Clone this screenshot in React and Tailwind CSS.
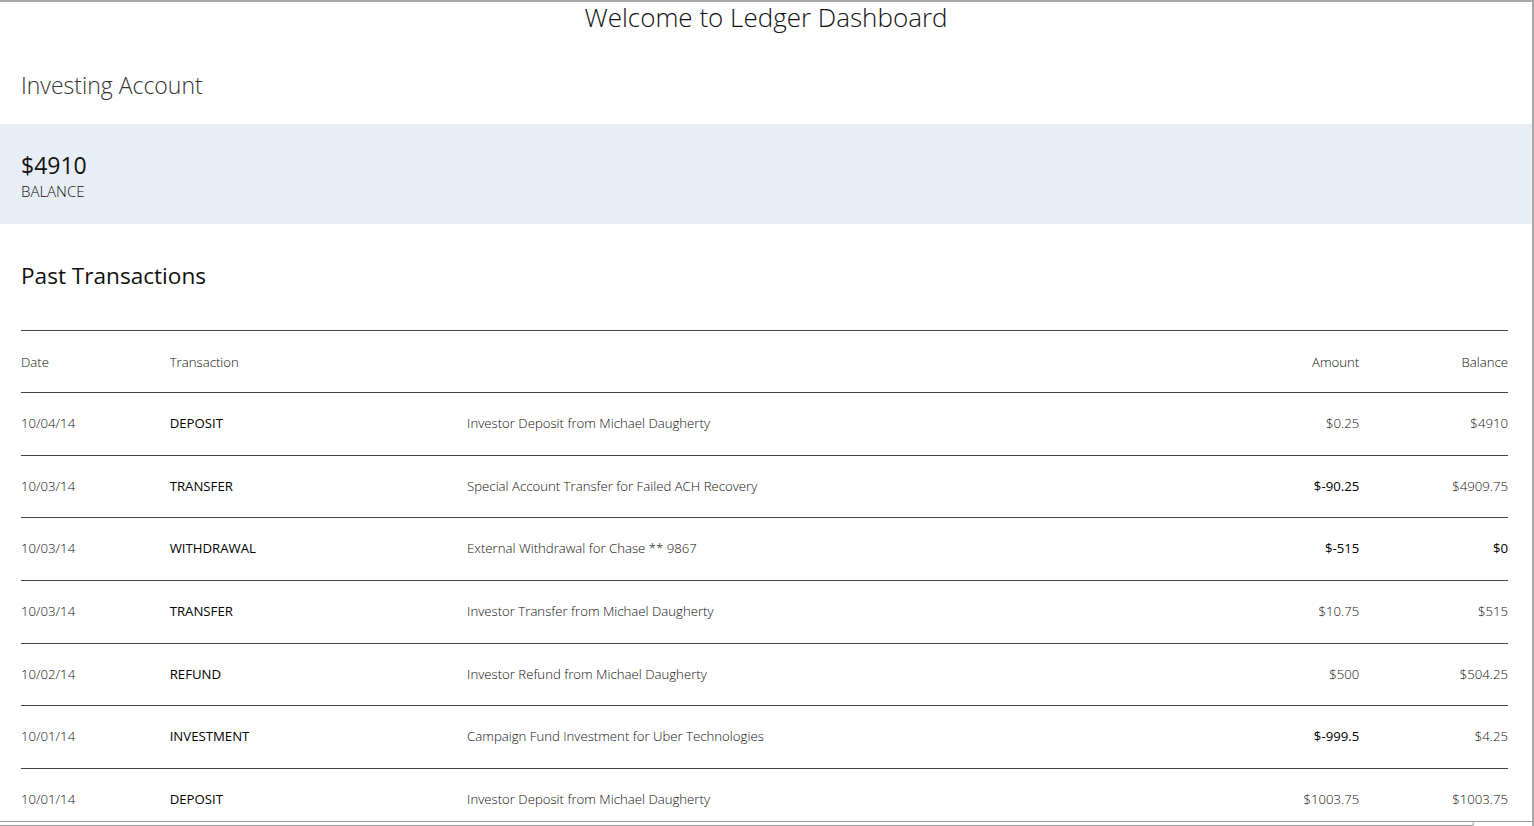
import React from "react";

const rows = [
  { date: "10/04/14", type: "DEPOSIT", desc: "Investor Deposit from Michael Daugherty", amount: "$0.25", neg: false, balance: "$4910", bb: false },
  { date: "10/03/14", type: "TRANSFER", desc: "Special Account Transfer for Failed ACH Recovery", amount: "$-90.25", neg: true, balance: "$4909.75", bb: false },
  { date: "10/03/14", type: "WITHDRAWAL", desc: "External Withdrawal for Chase ** 9867", amount: "$-515", neg: true, balance: "$0", bb: true },
  { date: "10/03/14", type: "TRANSFER", desc: "Investor Transfer from Michael Daugherty", amount: "$10.75", neg: false, balance: "$515", bb: false },
  { date: "10/02/14", type: "REFUND", desc: "Investor Refund from Michael Daugherty", amount: "$500", neg: false, balance: "$504.25", bb: false },
  { date: "10/01/14", type: "INVESTMENT", desc: "Campaign Fund Investment for Uber Technologies", amount: "$-999.5", neg: true, balance: "$4.25", bb: false },
  { date: "10/01/14", type: "DEPOSIT", desc: "Investor Deposit from Michael Daugherty", amount: "$1003.75", neg: false, balance: "$1003.75", bb: false },
];

export default function App() {
  return (
    <div
      className="relative h-[826px] w-full overflow-hidden border-t-2 border-r-2 border-[#a8a8a8] bg-white text-[#222]"
      style={{ fontFamily: '"Open Sans", "Noto Sans", sans-serif' }}
    >
      <h1 className="text-center text-[26px] font-light leading-[30px] text-[#111]">
        Welcome to Ledger Dashboard
      </h1>
      <h2 className="mt-[37px] pl-[21px] text-[23px] font-light leading-[32px] text-[#333]">
        Investing Account
      </h2>
      <div className="mt-[23px] flex h-[100px] flex-col justify-center bg-[#e7eef5] pl-[21px] pt-[3px]">
        <div className="text-[23px] leading-[28px] text-[#111]">$4910</div>
        <div className="mt-[3px] text-[15px] font-light leading-[18px] text-[#111]">BALANCE</div>
      </div>
      <div className="pl-[21px] pr-[24px]">
        <h3 className="mt-[37px] text-[22.6px] leading-[30px] text-[#111]">Past Transactions</h3>
        <table className="mt-[39px] w-full table-fixed border-collapse border-t border-[#444] text-[13.2px]">
          <colgroup>
            <col className="w-[10%]" />
            <col className="w-[20%]" />
            <col className="w-[50%]" />
            <col className="w-[10%]" />
            <col className="w-[10%]" />
          </colgroup>
          <thead>
            <tr className="h-[62px] border-b border-[#444]">
              <th className="pt-[2px] text-left font-light text-[#111]">Date</th>
              <th className="pt-[2px] text-left font-light text-[#111]">Transaction</th>
              <th></th>
              <th className="pt-[2px] text-right font-light text-[#111]">Amount</th>
              <th className="pt-[2px] text-right font-light text-[#111]">Balance</th>
            </tr>
          </thead>
          <tbody>
            {rows.map((r, i) => (
              <tr key={i} className="h-[62.7px] border-b border-[#444]">
                <td className="font-light text-[#111]">{r.date}</td>
                <td className="font-normal text-black">{r.type}</td>
                <td className="font-light text-[#111]">{r.desc}</td>
                <td className={r.neg ? "text-right font-medium text-black" : "text-right font-light text-[#111]"}>
                  {r.amount}
                </td>
                <td className={r.bb ? "text-right font-medium text-black" : "text-right font-light text-[#111]"}>
                  {r.balance}
                </td>
              </tr>
            ))}
          </tbody>
        </table>
      </div>
      <div className="absolute bottom-0 left-0 right-0 h-[5px] border-t border-[#9a9a9a] bg-white">
        <div className="h-[4px] w-[1474px] rounded-r-[3px] border-r border-b border-[#9a9a9a]" />
      </div>
    </div>
  );
}
